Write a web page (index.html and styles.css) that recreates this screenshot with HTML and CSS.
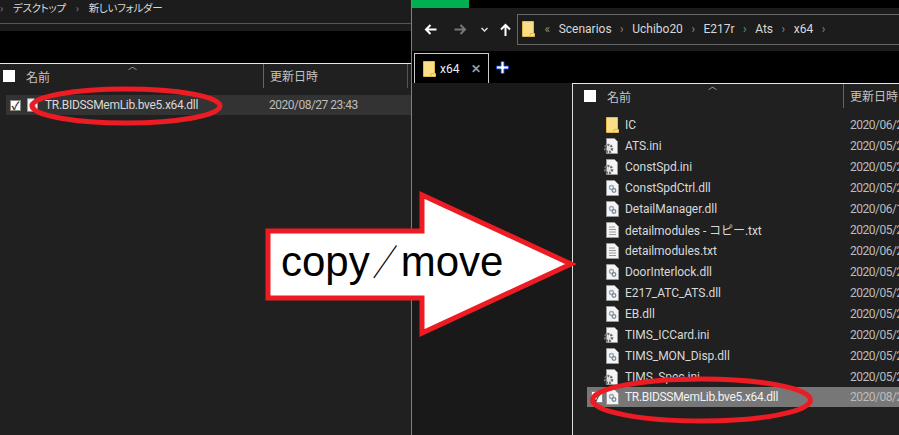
FILE: index.html
```html
<!DOCTYPE html>
<html>
<head>
    <meta charset="UTF-8">
    <title>copy/move</title>
    <link rel="stylesheet" href="styles.css">
</head>
<body>
    <svg class="defs" width="0" height="0">
        <symbol id="folder" viewBox="0 0 13 16">
            <path d="M.5.5h11v12h1v3H.5z" fill="#fadf86" stroke="#e2b84e"/>
            <path d="M8 15.500v-3h4.500" fill="none" stroke="#e2b84e"/>
        </symbol>
        <symbol id="dll" viewBox="0 0 13 16">
            <path d="M.5.5h8l4 4v11H.5z" fill="#f4f4f4" stroke="#9a9a9a"/>
            <circle cx="5.500" cy="7.500" r="2" fill="none" stroke="#93a5b8" stroke-width="1.300"/>
            <circle cx="8" cy="10.500" r="1.800" fill="none" stroke="#7a8b9c" stroke-width="1.300"/>
        </symbol>
        <symbol id="ini" viewBox="0 0 16 16">
            <path d="M3.500.5h8l3 3v12h-11z" fill="#f4f4f4" stroke="#9a9a9a"/>
            <circle cx="5.500" cy="10.500" r="3.500" fill="none" stroke="#6e6e6e" stroke-width="2.500" stroke-dasharray="2 1"/>
            <circle cx="5.500" cy="10.500" r="1.500" fill="#ddd"/>
        </symbol>
        <symbol id="txt" viewBox="0 0 13 16">
            <path d="M.5.5h8l4 4v11H.5z" fill="#f4f4f4" stroke="#9a9a9a"/>
            <path d="M3 5h6M3 7.500h7M3 10h7M3 12.500h7" stroke="#9a9a9a"/>
        </symbol>
    </svg>

    <div class="desktop">
        <section class="window window-left">
            <div class="crumbs">
                <span class="sep">›</span><span>デスクトップ</span><span class="sep">›</span><span>新しいフォルダー</span>
            </div>
            <div class="ribbon"></div>
            <div class="list-head head-left">
                <i class="check"></i>
                <span class="col-name">名前</span>
                <span class="col-date">更新日時</span>
                <b class="sort">︿</b>
            </div>
            <div class="row-left">
                <i class="check checked">✓</i>
                <svg class="ico"><use href="#dll"/></svg>
                <span class="file-name">TR.BIDSSMemLib.bve5.x64.dll</span>
                <span class="file-date">2020/08/27 23:43</span>
            </div>
        </section>

        <section class="window window-right">
            <div class="titlebar"><div class="green-tab"></div></div>
            <div class="navbar">
                <svg class="nav" width="13" height="13" viewBox="0 0 13 13"><path d="M12.500 6.500H2M6.500 2 2 6.500l4.500 4.500" fill="none" stroke="#fff" stroke-width="2"/></svg>
                <svg class="nav" width="13" height="13" viewBox="0 0 13 13"><path d="M.5 6.500H11M6.500 2 11 6.500 6.500 11" fill="none" stroke="#777" stroke-width="2"/></svg>
                <svg class="nav" width="7" height="6" viewBox="0 0 7 6"><path d="m.5 1 3 3 3-3" fill="none" stroke="#ddd" stroke-width="1.500"/></svg>
                <svg class="nav" width="13" height="13" viewBox="0 0 13 13"><path d="M6.500 13V2M2 6.500l4.500-4.500 4.500 4.500" fill="none" stroke="#fff" stroke-width="2"/></svg>
                <div class="address">
                    <svg class="ico"><use href="#folder"/></svg>
                    <span class="sep sep-first">«</span><span>Scenarios</span><span class="sep">›</span><span>Uchibo20</span><span class="sep">›</span><span>E217r</span><span class="sep">›</span><span>Ats</span><span class="sep">›</span><span>x64</span><span class="sep">›</span>
                </div>
            </div>
            <div class="tabbar">
                <div class="tab">
                    <svg class="ico"><use href="#folder"/></svg>
                    <span>x64</span>
                    <span class="tab-close">✕</span>
                </div>
                <svg class="tab-add" width="13" height="13" viewBox="0 0 13 13"><path d="M6.500 1v11M1 6.500h11" stroke="#fff" stroke-width="3"/><path d="M5 .5h3V5h4.500v3H8v4.500H5V8H.5V5H5z" fill="none" stroke="#1746c8"/></svg>
            </div>
            <div class="panes">
                <div class="tree"></div>
                <div class="files">
                    <div class="list-head head-right">
                        <i class="check"></i>
                        <span class="col-name">名前</span>
                        <span class="col-date">更新日時</span>
                        <b class="sort">︿</b>
                    </div>
                    <ul class="file-list">
                        <li><svg class="ico"><use href="#folder"/></svg><span class="file-name">IC</span><span class="file-date">2020/06/2</span></li>
                        <li><svg class="ico ico-ini"><use href="#ini"/></svg><span class="file-name">ATS.ini</span><span class="file-date">2020/05/2</span></li>
                        <li><svg class="ico ico-ini"><use href="#ini"/></svg><span class="file-name">ConstSpd.ini</span><span class="file-date">2020/05/2</span></li>
                        <li><svg class="ico"><use href="#dll"/></svg><span class="file-name">ConstSpdCtrl.dll</span><span class="file-date">2020/05/2</span></li>
                        <li><svg class="ico"><use href="#dll"/></svg><span class="file-name">DetailManager.dll</span><span class="file-date">2020/06/1</span></li>
                        <li><svg class="ico"><use href="#txt"/></svg><span class="file-name">detailmodules - コピー.txt</span><span class="file-date">2020/05/2</span></li>
                        <li><svg class="ico"><use href="#txt"/></svg><span class="file-name">detailmodules.txt</span><span class="file-date">2020/06/2</span></li>
                        <li><svg class="ico"><use href="#dll"/></svg><span class="file-name">DoorInterlock.dll</span><span class="file-date">2020/05/2</span></li>
                        <li><svg class="ico"><use href="#dll"/></svg><span class="file-name">E217_ATC_ATS.dll</span><span class="file-date">2020/05/2</span></li>
                        <li><svg class="ico"><use href="#dll"/></svg><span class="file-name">EB.dll</span><span class="file-date">2020/05/2</span></li>
                        <li><svg class="ico ico-ini"><use href="#ini"/></svg><span class="file-name">TIMS_ICCard.ini</span><span class="file-date">2020/05/2</span></li>
                        <li><svg class="ico"><use href="#dll"/></svg><span class="file-name">TIMS_MON_Disp.dll</span><span class="file-date">2020/05/2</span></li>
                        <li><svg class="ico ico-ini"><use href="#ini"/></svg><span class="file-name">TIMS_Spec.ini</span><span class="file-date">2020/05/2</span></li>
                        <li class="selected"><i class="check checked">✓</i><svg class="ico"><use href="#dll"/></svg><span class="file-name">TR.BIDSSMemLib.bve5.x64.dll</span><span class="file-date">2020/08/2</span></li>
                    </ul>
                </div>
            </div>
        </section>
    </div>

    <!-- annotations drawn over the two windows -->
    <svg class="marks" width="899" height="435" viewBox="0 0 899 435">
        <ellipse cx="126" cy="106" rx="94" ry="17" fill="none" stroke="#ed1c24" stroke-width="5"/>
        <ellipse cx="701.500" cy="400" rx="109" ry="21" fill="none" stroke="#ed1c24" stroke-width="5"/>
        <path d="M268 231H422V195L571 264 422 333V298H268z" fill="#fff" stroke="#ed1c24" stroke-width="5"/>
    </svg>
    <div class="arrow-label">copy<span class="slash">／</span>move</div>
</body>
</html>
```

FILE: styles.css
```css
html, body {
    margin: 0;
    height: 100%;
    overflow: hidden;
    background-color: #202020;
}
body {
    position: relative;
    font-family: Roboto, "Noto Sans CJK JP", sans-serif;
    font-size: 12px;
    color: #d8d8d8;
}
.defs {
    position: absolute;
}
.desktop {
    display: flex;
    width: 899px;
    height: 435px;
}
.window {
    height: 435px;
    display: flex;
    flex-direction: column;
    background-color: #202020;
}
.window-left {
    width: 411px;
    flex: none;
}
.window-right {
    flex: 1;
    border-left: 1px solid #2fa77c;
    min-width: 0;
}
.sep {
    color: #8a8a8a;
}

/* left window */
.crumbs {
    display: flex;
    align-items: center;
    gap: 10px;
    height: 15px;
    padding: 0 0 8px 0;
    background-color: #1c1c1c;
    border-bottom: 1px solid #555;
    font-family: "Noto Sans CJK JP", sans-serif;
    font-size: 10.500px;
    letter-spacing: -.3px;
    font-feature-settings: "palt";
}
.ribbon {
    height: 32px;
    margin-top: 7px;
    background-color: #000;
}
.window-left .ribbon {
    box-shadow: 0 -7px 0 #1c1c1c;
}
.list-head {
    position: relative;
    height: 24px;
    display: flex;
    align-items: center;
    border-top: 1px solid #e8e8e8;
    font-family: "Noto Sans CJK JP", sans-serif;
    color: #c4c4c4;
}
.check {
    display: flex;
    align-items: center;
    justify-content: center;
    width: 12px;
    height: 12px;
    background-color: #fff;
    flex: none;
    font-style: normal;
}
.checked {
    color: #333;
    font-size: 11px;
    font-weight: bold;
    border: 1px solid #888;
    box-sizing: border-box;
}
.col-date {
    border-left: 1px solid #666;
    height: 24px;
    line-height: 24px;
    box-sizing: border-box;
    padding-left: 6px;
    flex: none;
}
.sort {
    position: absolute;
    top: -3px;
    font-size: 9px;
    font-weight: normal;
    line-height: 9px;
    color: #aaa;
}
.head-left .check {
    margin-left: 3px;
}
.head-left .col-name {
    margin-left: 11px;
    width: 237px;
}
.head-left .col-date {
    width: 145px;
    border-right: 1px solid #555;
}
.head-left .sort {
    left: 128px;
}
.row-left {
    display: flex;
    align-items: center;
    height: 20px;
    margin: 7px 0 0 6px;
    background-color: #333;
}
.row-left .check {
    width: 11px;
    height: 11px;
    margin: 0 6px 0 4px;
}
.row-left .ico {
    width: 11px;
}
.row-left .file-name {
    margin-left: 7px;
    width: 224px;
    letter-spacing: -.3px;
}
.ico {
    width: 13px;
    height: 16px;
    flex: none;
}
.ico-ini {
    width: 16px;
    margin-left: -3px;
}

/* right window */
.titlebar {
    height: 8px;
    background-color: #000;
    flex: none;
}
.green-tab {
    width: 57px;
    height: 8px;
    background-color: #00b050;
}
.navbar {
    height: 43px;
    flex: none;
    display: flex;
    align-items: center;
    background-color: #1c1c1c;
    padding-left: 12px;
}
.nav {
    flex: none;
}
.nav:nth-child(1) {
    margin-right: 17px;
}
.nav:nth-child(2) {
    margin-right: 14px;
}
.nav:nth-child(3) {
    margin-right: 11px;
}
.nav:nth-child(4) {
    margin-right: 5px;
}
.address {
    flex: 1;
    height: 29px;
    display: flex;
    align-items: center;
    gap: 8.500px;
    margin-top: -1px;
    padding-left: 4px;
    border: 1px solid #666;
    border-right: none;
    white-space: nowrap;
}
.sep-first {
    margin-left: 1px;
}
.tabbar {
    height: 32px;
    flex: none;
    display: flex;
    align-items: flex-end;
    background-color: #000;
}
.tab {
    width: 75px;
    height: 30px;
    margin-left: 2px;
    display: flex;
    align-items: center;
    box-sizing: border-box;
    padding-left: 8px;
    gap: 4px;
    border: 1px solid #ccc;
    border-bottom: none;
    color: #eee;
}
.tab-close {
    margin-left: 8px;
    color: #999;
    font-weight: bold;
}
.tab-add {
    margin: 0 0 9px 7px;
}
.panes {
    flex: 1;
    display: flex;
    min-height: 0;
}
.tree {
    width: 160px;
    flex: none;
    background-color: #191919;
}
.files {
    flex: 1;
    min-width: 0;
    border-left: 1px solid #ddd;
    background-color: #202020;
}
.head-right .check {
    margin-left: 11px;
}
.head-right .col-name {
    margin-left: 11px;
    width: 236px;
}
.head-right .col-date {
    flex: 1;
}
.head-right .sort {
    left: 135px;
}
.file-list {
    list-style: none;
    margin: 6px 0 0;
    padding: 0;
}
.file-list li {
    display: flex;
    align-items: center;
    height: 21px;
    padding-left: 33px;
    white-space: nowrap;
}
.file-name {
    margin-left: 6px;
    width: 225px;
    flex: none;
    letter-spacing: -.05px;
}
.file-date {
    color: #bdbdbd;
    letter-spacing: -.5px;
}
.file-list .selected {
    margin-left: 14px;
    padding-left: 5px;
    background-color: #777;
    color: #f2f2f2;
    height: 20px;
}
.selected .check {
    margin-right: 3px;
    margin-left: -1px;
}
.selected .file-name {
    letter-spacing: -.3px;
}

/* annotations */
.marks {
    position: absolute;
    left: 0;
    top: 0;
}
.arrow-label {
    position: absolute;
    left: 281px;
    top: 238px;
    font-family: "Liberation Sans", sans-serif;
    font-size: 42px;
    line-height: 44px;
    color: #000;
    white-space: nowrap;
}
.slash {
    display: inline-block;
    margin: 0 -2.500px;
    transform: scaleX(.7);
    font-family: "Noto Sans CJK JP", sans-serif;
    font-feature-settings: "palt";
    font-size: 36px;
}
```
